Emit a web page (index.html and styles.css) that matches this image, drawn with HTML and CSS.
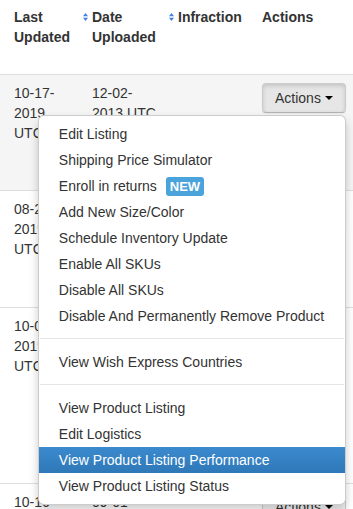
FILE: index.html
```html
<!DOCTYPE html>
<html lang="en">
<head>
    <meta charset="UTF-8">
    <meta name="viewport" content="width=device-width, initial-scale=1.0">
    <title>Products</title>
    <link rel="stylesheet" href="styles.css">
</head>
<body>
    <!-- Product listing table -->
    <table class="product-table">
        <colgroup>
            <col class="col-updated">
            <col class="col-uploaded">
            <col class="col-infraction">
            <col class="col-actions">
        </colgroup>
        <thead>
            <tr class="head-row">
                <th>Last Updated</th>
                <th><span class="sort-icon"><svg width="5" height="8" viewBox="0 0 5 8"><polygon points="0,3.2 2.5,0 5,3.2" /><polygon points="0,4.8 2.5,8 5,4.8" /></svg></span>Date Uploaded</th>
                <th><span class="sort-icon"><svg width="5" height="8" viewBox="0 0 5 8"><polygon points="0,3.2 2.5,0 5,3.2" /><polygon points="0,4.8 2.5,8 5,4.8" /></svg></span>Infraction</th>
                <th>Actions</th>
            </tr>
        </thead>
        <tbody>
            <tr class="row-one hover">
                <td>10-17-2019 UTC</td>
                <td>12-02-2013 UTC</td>
                <td></td>
                <td>
                    <div class="btn-group open">
                        <button class="btn">Actions <span class="caret"></span></button>
                        <ul class="dropdown-menu">
                            <li><a href="#">Edit Listing</a></li>
                            <li><a href="#">Shipping Price Simulator</a></li>
                            <li><a href="#">Enroll in returns <span class="label-new">NEW</span></a></li>
                            <li><a href="#">Add New Size/Color</a></li>
                            <li><a href="#">Schedule Inventory Update</a></li>
                            <li><a href="#">Enable All SKUs</a></li>
                            <li><a href="#">Disable All SKUs</a></li>
                            <li><a href="#">Disable And Permanently Remove Product</a></li>
                            <li class="divider"></li>
                            <li><a href="#">View Wish Express Countries</a></li>
                            <li class="divider"></li>
                            <li><a href="#">View Product Listing</a></li>
                            <li><a href="#">Edit Logistics</a></li>
                            <li class="active"><a href="#">View Product Listing Performance</a></li>
                            <li><a href="#">View Product Listing Status</a></li>
                        </ul>
                    </div>
                </td>
            </tr>
            <tr class="row-two">
                <td>08-21-2019 UTC</td>
                <td>05-14-2014 UTC</td>
                <td></td>
                <td><div class="btn-group"><button class="btn">Actions <span class="caret"></span></button></div></td>
            </tr>
            <tr class="row-three">
                <td>10-04-2019 UTC</td>
                <td>11-23-2013 UTC</td>
                <td></td>
                <td><div class="btn-group"><button class="btn">Actions <span class="caret"></span></button></div></td>
            </tr>
            <tr class="row-four">
                <td>10-16-2019 UTC</td>
                <td>09-01-2014 UTC</td>
                <td></td>
                <td><div class="btn-group"><button class="btn">Actions <span class="caret"></span></button></div></td>
            </tr>
        </tbody>
    </table>
</body>
</html>
```

FILE: styles.css
```css
body {
    margin: 0;
    padding: 0;
    font-family: "Liberation Sans", Arial, sans-serif;
    font-size: 14px;
    line-height: 20px;
    color: #333;
    background-color: #fff;
}

/* Table */
.product-table {
    width: 353px;
    table-layout: fixed;
    border-collapse: collapse;
    border-spacing: 0;
}

.col-updated { width: 84px; }
.col-uploaded { width: 86px; }
.col-infraction { width: 84px; }
.col-actions { width: 99px; }

.product-table th,
.product-table td {
    padding: 8px;
    text-align: left;
    vertical-align: top;
}

.product-table th {
    font-weight: bold;
    padding-top: 7px;
}

.product-table th:first-child,
.product-table td:first-child {
    padding-left: 14px;
}

.product-table td {
    border-top: 1px solid #ddd;
}

.head-row { height: 74px; }
.row-one { height: 116px; }
.row-two { height: 117px; }
.row-three { height: 176px; }
.row-four { height: 60px; }

.product-table tr.hover td {
    background-color: #f5f5f5;
}

.sort-icon {
    display: inline-block;
    width: 5px;
    margin-left: -9px;
    margin-right: 4px;
    vertical-align: 1px;
    line-height: 8px;
}

.sort-icon svg {
    display: block;
    fill: #3f7fe0;
}

/* Buttons */
.btn-group {
    position: relative;
    display: inline-block;
    white-space: nowrap;
}

.btn {
    display: inline-block;
    margin: 0;
    padding: 4px 12px;
    font-family: inherit;
    font-size: 14px;
    line-height: 20px;
    color: #333;
    white-space: nowrap;
    background-color: #f5f5f5;
    background-image: linear-gradient(#ffffff, #e6e6e6);
    border: 1px solid #cccccc;
    border-bottom-color: #b3b3b3;
    border-radius: 4px;
    box-shadow: inset 0 1px 0 rgba(255, 255, 255, 0.2), 0 1px 2px rgba(0, 0, 0, 0.05);
    cursor: pointer;
}

.btn-group.open .btn {
    background-color: #e6e6e6;
    background-image: none;
    box-shadow: inset 0 2px 4px rgba(0, 0, 0, 0.15), 0 1px 2px rgba(0, 0, 0, 0.05);
}

.caret {
    display: inline-block;
    width: 0;
    height: 0;
    vertical-align: top;
    margin-top: 8px;
    border-top: 4px solid #000;
    border-left: 4px solid transparent;
    border-right: 4px solid transparent;
}

/* Dropdown menu */
.dropdown-menu {
    position: absolute;
    top: 100%;
    right: 0;
    z-index: 1000;
    width: 306px;
    margin: 2px 0 0;
    padding: 5px 0;
    list-style: none;
    background-color: #fff;
    border: 1px solid rgba(0, 0, 0, 0.2);
    border-radius: 6px;
    box-shadow: 0 5px 10px rgba(0, 0, 0, 0.2);
}

.dropdown-menu li a {
    display: block;
    padding: 3px 20px;
    line-height: 20px;
    color: #333;
    text-decoration: none;
    white-space: nowrap;
}

.dropdown-menu li.active a {
    color: #fff;
    background-color: #3582c4;
    background-image: linear-gradient(#3b8ace, #2f78b8);
}

.dropdown-menu .divider {
    height: 1px;
    margin: 9px 1px;
    overflow: hidden;
    background-color: #e5e5e5;
    border-bottom: 1px solid #fff;
}

.label-new {
    display: inline-block;
    margin-left: 5px;
    padding: 2px 4px;
    font-size: 13px;
    font-weight: bold;
    line-height: 15px;
    color: #fff;
    background-color: #4ba3dc;
    border-radius: 3px;
    vertical-align: 0;
}
```
